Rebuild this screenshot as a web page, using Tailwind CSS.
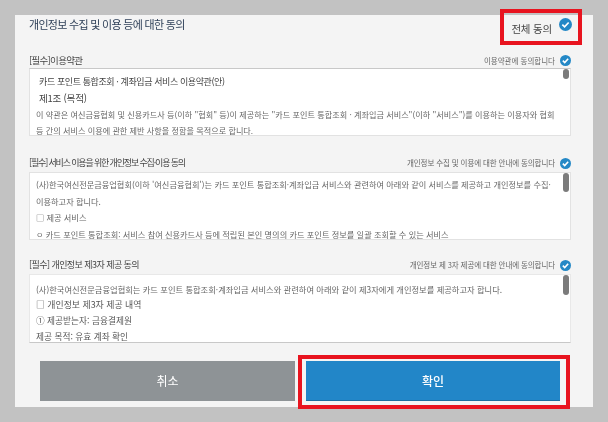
<!DOCTYPE html>
<html lang="ko">
<head>
<meta charset="utf-8">
<script src="https://cdn.jsdelivr.net/npm/@tailwindcss/browser@4"></script>
</head>
<body class="m-0 bg-[#c2c2c2]">
<div class="relative w-[608px] h-[422px] overflow-hidden bg-[#c2c2c2] pt-[15px] pl-[15px] blur-[0.35px] font-['Noto_Sans_CJK_KR','Noto_Sans',sans-serif]">
  <div class="w-[578px] h-[392px] bg-[#f4f4f4] pl-[14px] pr-[22px] flex flex-col">
    <div class="h-[38px] flex items-start justify-between">
      <h1 class="text-[11px] tracking-[-0.7px] leading-[18px] font-normal text-[#2f4058]">개인정보 수집 및 이용 등에 대한 동의</h1>
      <div class="flex items-start gap-[7px] mr-[-1px] pt-[3px]">
        <span class="text-[10.5px] tracking-[-0.2px] leading-[20px] mt-[1px] text-[#444]">전체 동의</span>
        <svg class="w-[13px] h-[13px]" viewBox="0 0 14 14"><circle cx="7" cy="7" r="7" fill="#2488c6"/><path d="M3.6 7.2 6 9.6 10.4 4.8" fill="none" stroke="#fff" stroke-width="1.8"/></svg>
      </div>
    </div>
    <section class="h-[83px] shrink-0">
      <div class="h-[15px] flex items-center justify-between">
        <span class="text-[9.5px] tracking-[-0.7px] text-[#444]">[필수]이용약관</span>
        <span class="flex items-center gap-[5px] text-[7.5px] text-[#666]">이용약관에 동의합니다<svg class="w-[11px] h-[11px]" viewBox="0 0 14 14"><circle cx="7" cy="7" r="7" fill="#2488c6"/><path d="M3.6 7.2 6 9.6 10.4 4.8" fill="none" stroke="#fff" stroke-width="2"/></svg></span>
      </div>
      <div class="relative h-[68px] bg-white border border-[#e2e2e2] border-t-[#c8c8c8] pl-[9px] overflow-hidden text-[8.14px] leading-[15.5px] text-[#666] whitespace-nowrap">
        <p class="pt-[5px] text-[9px] tracking-[-0.4px] leading-[16px] text-[#444]">카드 포인트 통합조회 · 계좌입금 서비스 이용약관(안)</p>
        <p class="text-[9.5px] tracking-[-0.2px] leading-[17px] text-[#444]">제1조 (목적)</p>
        <p class="ml-[-3px]">이 약관은 여신금융협회 및 신용카드사 등(이하 "협회" 등)이 제공하는 "카드 포인트 통합조회 · 계좌입금 서비스"(이하 "서비스")를 이용하는 이용자와 협회</p>
        <p class="ml-[-3px]">등 간의 서비스 이용에 관한 제반 사항을 정함을 목적으로 합니다.</p>
        <div class="absolute right-[1px] top-0 w-[6px] h-[10px] rounded-full bg-[#7b7b7b]"></div>
      </div>
    </section>
    <div class="h-[20px] shrink-0"></div>
    <section class="h-[84px] shrink-0">
      <div class="h-[16px] pb-[2px] flex items-center justify-between">
        <span class="text-[9px] tracking-[-1.15px] text-[#444]">[필수] 서비스 이용을 위한 개인정보 수집·이용 동의</span>
        <span class="flex items-center gap-[5px] text-[7.5px] tracking-[-0.1px] text-[#666]">개인정보 수집 및 이용에 대한 안내에 동의합니다<svg class="w-[11px] h-[11px]" viewBox="0 0 14 14"><circle cx="7" cy="7" r="7" fill="#2488c6"/><path d="M3.6 7.2 6 9.6 10.4 4.8" fill="none" stroke="#fff" stroke-width="2"/></svg></span>
      </div>
      <div class="relative h-[68px] bg-white border border-[#e2e2e2] pl-[6px] pt-[3px] overflow-hidden text-[8.2px] leading-[16.7px] text-[#666] whitespace-nowrap">
        <p>(사)한국여신전문금융업협회(이하 '여신금융협회')는 카드 포인트 통합조회·계좌입금 서비스와 관련하여 아래와 같이 서비스를 제공하고 개인정보를 수집·</p>
        <p>이용하고자 합니다.</p>
        <p>□ 제공 서비스</p>
        <p>ㅇ 카드 포인트 통합조회: 서비스 참여 신용카드사 등에 적립된 본인 명의의 카드 포인트 정보를 일괄 조회할 수 있는 서비스</p>
        <div class="absolute right-[1px] top-0 w-[6px] h-[19px] rounded-full bg-[#7b7b7b]"></div>
      </div>
    </section>
    <div class="h-[18px] shrink-0"></div>
    <section class="h-[85px] shrink-0">
      <div class="h-[16px] pb-[2px] flex items-center justify-between">
        <span class="text-[9px] tracking-[-0.55px] text-[#444]">[필수] 개인정보 제3자 제공 동의</span>
        <span class="flex items-center gap-[5px] text-[7.5px] tracking-[-0.1px] text-[#666]">개인정보 제 3자 제공에 대한 안내에 동의합니다<svg class="w-[11px] h-[11px]" viewBox="0 0 14 14"><circle cx="7" cy="7" r="7" fill="#2488c6"/><path d="M3.6 7.2 6 9.6 10.4 4.8" fill="none" stroke="#fff" stroke-width="2"/></svg></span>
      </div>
      <div class="relative h-[69px] bg-white border border-[#e8e8e8] border-b-[#c8c8c8] pl-[6px] pt-[6px] overflow-hidden text-[8.27px] leading-[16px] text-[#666] whitespace-nowrap">
        <p>(사)한국여신전문금융업협회는 카드 포인트 통합조회·계좌입금 서비스와 관련하여 아래와 같이 제3자에게 개인정보를 제공하고자 합니다.</p>
        <p class="text-[8.9px] text-[#555]">□ 개인정보 제3자 제공 내역</p>
        <p class="text-[8.7px] text-[#555]">① 제공받는자: 금융결제원</p>
        <p class="text-[8.7px] text-[#555]">제공 목적: 유효 계좌 확인</p>
        <div class="absolute right-[1px] top-0 w-[6px] h-[20px] rounded-full bg-[#7b7b7b]"></div>
      </div>
    </section>
    <div class="mt-[18px] pl-[11px] flex gap-[11px] shrink-0">
      <button class="w-[255px] h-[40px] bg-[#8e9396] text-white text-[12px]">취소</button>
      <button class="w-[254px] h-[40px] bg-[#2286c8] border-b border-[#1e6f9f] text-white text-[12px] font-medium">확인</button>
    </div>
  </div>
  <div class="absolute left-[500px] top-[9px] w-[82px] h-[36px] border-[4px] border-[#e8141f]"></div>
  <div class="absolute left-[298px] top-[355px] w-[272px] h-[54px] border-[4px] border-[#e8141f]"></div>
</div>
</body>
</html>
